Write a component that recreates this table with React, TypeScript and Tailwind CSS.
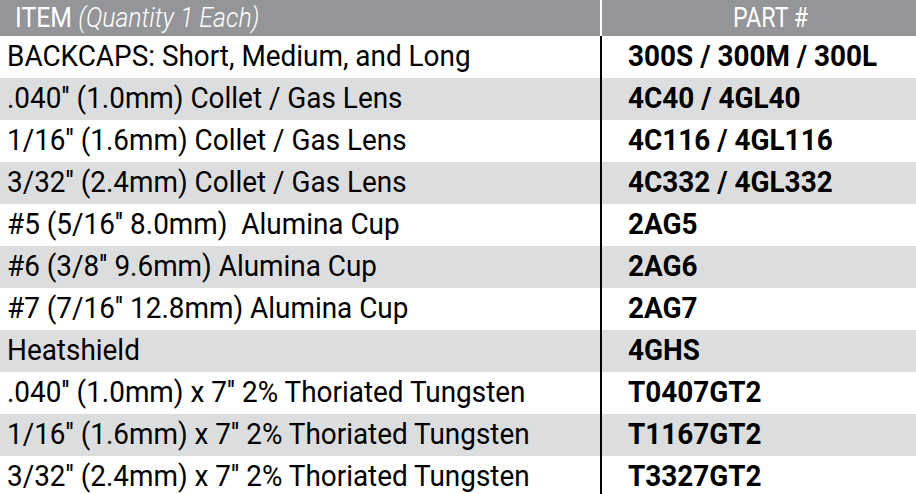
const rows: [string, string][] = [
  ['BACKCAPS: Short, Medium, and Long', '300S / 300M / 300L'],
  ['.040\'\' (1.0mm) Collet / Gas Lens', '4C40 / 4GL40'],
  ['1/16\'\' (1.6mm) Collet / Gas Lens', '4C116 / 4GL116'],
  ['3/32\'\' (2.4mm) Collet / Gas Lens', '4C332 / 4GL332'],
  ['#5 (5/16\'\' 8.0mm)  Alumina Cup', '2AG5'],
  ['#6 (3/8\'\' 9.6mm) Alumina Cup', '2AG6'],
  ['#7 (7/16\'\' 12.8mm) Alumina Cup', '2AG7'],
  ['Heatshield', '4GHS'],
  ['.040\'\' (1.0mm) x 7\'\' 2% Thoriated Tungsten', 'T0407GT2'],
  ['1/16\'\' (1.6mm) x 7\'\' 2% Thoriated Tungsten', 'T1167GT2'],
  ['3/32\'\' (2.4mm) x 7\'\' 2% Thoriated Tungsten', 'T3327GT2'],
];

export default function App() {
  return (
    <div className="w-[916px] h-[494px] overflow-hidden bg-white font-['Roboto',sans-serif] text-black">
      {/* header */}
      <div className="flex h-[36px] bg-[#939598] text-white">
        <div className="w-[600px] flex items-center pl-[15px] text-[27px]">
          <span className="inline-block scale-x-[0.92] origin-left whitespace-pre">
            ITEM <i className="font-light">(Quantity 1 Each)</i>
          </span>
        </div>
        <div className="flex-1 border-l-2 border-white flex items-center pl-[131px] text-[27px]">
          <span className="inline-block scale-x-[0.86] origin-left whitespace-pre">PART #</span>
        </div>
      </div>
      {rows.map(([item, part], i) => (
        <div key={i} className={`flex h-[42px] ${i % 2 === 1 ? 'bg-[#dcdddf]' : 'bg-white'}`}>
          <div className="w-[600px] flex items-center pl-[7px] pb-[3px] text-[30px]">
            <span className="inline-block scale-x-[0.93] origin-left whitespace-pre">{item}</span>
          </div>
          <div className="flex-1 border-l-2 border-black flex items-center pl-[26px] pb-[3px] text-[30px] font-bold">
            <span className="inline-block scale-x-[0.93] origin-left whitespace-pre">{part}</span>
          </div>
        </div>
      ))}
    </div>
  );
}
